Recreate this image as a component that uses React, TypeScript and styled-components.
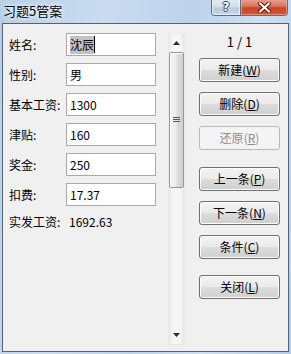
import React, { FC } from "react";
import styled, { createGlobalStyle } from "styled-components";

interface IField {
  label: string;
  value: string;
  selected?: boolean;
}

const fields: IField[] = [
  { label: "姓名:", value: "沈辰", selected: true },
  { label: "性别:", value: "男" },
  { label: "基本工资:", value: "1300" },
  { label: "津贴:", value: "160" },
  { label: "奖金:", value: "250" },
  { label: "扣费:", value: "17.37" },
];

interface IAction {
  text: string;
  key: string;
  top: number;
  disabled?: boolean;
}

const actions: IAction[] = [
  { text: "新建", key: "W", top: 8 },
  { text: "删除", key: "D", top: 10 },
  { text: "还原", key: "R", top: 10, disabled: true },
  { text: "上一条", key: "P", top: 17 },
  { text: "下一条", key: "N", top: 10 },
  { text: "条件", key: "C", top: 10 },
  { text: "关闭", key: "L", top: 16 },
];

const App: FC = () => {
  return (
    <>
      <GlobalStyle />
      <Window>
        <TitleBar>
          <Title>习题5管案</Title>
          <CaptionButtons>
            <HelpButton>?</HelpButton>
            <CloseButton>
              <svg width="13" height="11" viewBox="0 0 13 11">
                <path
                  d="M2 1.5 L11 9.5 M11 1.5 L2 9.5"
                  stroke="#5a1a10"
                  strokeWidth="4"
                  strokeLinecap="square"
                />
                <path
                  d="M2 1.5 L11 9.5 M11 1.5 L2 9.5"
                  stroke="#ffffff"
                  strokeWidth="2"
                  strokeLinecap="square"
                />
              </svg>
            </CloseButton>
          </CaptionButtons>
        </TitleBar>
        <Client>
          <Fields>
            {fields.map((f) => (
              <FieldRow key={f.label}>
                <Label>{f.label}</Label>
                <TextBox>
                  {f.selected ? (
                    <>
                      <Selection>{f.value}</Selection>
                      <Caret />
                    </>
                  ) : (
                    f.value
                  )}
                </TextBox>
              </FieldRow>
            ))}
            <ResultRow>
              <Label>实发工资:</Label>
              <Value>1692.63</Value>
            </ResultRow>
          </Fields>
          <ScrollBar>
            <ArrowBox>
              <svg width="7" height="4" viewBox="0 0 7 4">
                <path d="M3.5 0 L7 4 L0 4 Z" fill="#2b2b2b" />
              </svg>
            </ArrowBox>
            <Thumb>
              <svg width="7" height="6" viewBox="0 0 7 6">
                <path d="M0 0.5 H7 M0 2.5 H7 M0 4.5 H7" stroke="#555" strokeWidth="1" />
              </svg>
            </Thumb>
            <Track />
            <ArrowBox>
              <svg width="7" height="4" viewBox="0 0 7 4">
                <path d="M0 0 L7 0 L3.5 4 Z" fill="#2b2b2b" />
              </svg>
            </ArrowBox>
          </ScrollBar>
          <Actions>
            <Counter>1 / 1</Counter>
            {actions.map((a) => (
              <Button key={a.key} $top={a.top} disabled={a.disabled}>
                {a.text}(<u>{a.key}</u>)
              </Button>
            ))}
          </Actions>
        </Client>
      </Window>
    </>
  );
};

export default App;

const GlobalStyle = createGlobalStyle`
  html, body {
    margin: 0;
    padding: 0;
  }
  body {
    font-family: "Noto Sans CJK SC", "Noto Sans", sans-serif;
    font-size: 12px;
  }
`;

const Window = styled.div`
  width: 291px;
  height: 354px;
  box-sizing: border-box;
  display: flex;
  flex-direction: column;
  padding: 0 2px 2px 2px;
  background: linear-gradient(
    100deg,
    #b6cfe9 0%,
    #c9dcf0 30%,
    #bcd3eb 55%,
    #cde0f2 75%,
    #b4cce6 100%
  );
  overflow: hidden;
`;

const TitleBar = styled.div`
  height: 23px;
  display: flex;
  justify-content: space-between;
  align-items: flex-start;
`;

const Title = styled.div`
  padding: 3px 0 0 1px;
  font-size: 13px;
  line-height: 15px;
  color: #000;
  text-shadow: 0 0 6px #ffffff, 0 0 3px #ffffff;
`;

const CaptionButtons = styled.div`
  display: flex;
  height: 16px;
  margin-top: -1px;
  margin-right: 1px;
  border: 1px solid #5b6b80;
  border-top: none;
  border-radius: 0 0 4px 4px;
  overflow: hidden;
`;

const HelpButton = styled.div`
  width: 28px;
  display: flex;
  align-items: center;
  justify-content: center;
  border-right: 1px solid #5b6b80;
  background: linear-gradient(#e3ebf4 0%, #d3dfec 50%, #b9cbde 55%, #c9d8e8 100%);
  box-shadow: inset 0 0 0 1px rgba(255, 255, 255, 0.6);
  font-family: "DejaVu Sans", sans-serif;
  font-weight: bold;
  font-size: 12px;
  color: #ffffff;
  text-shadow: 1px 0 0 #2f3e52, -1px 0 0 #2f3e52, 0 1px 0 #2f3e52,
    0 -1px 0 #2f3e52;
`;

const CloseButton = styled.div`
  width: 46px;
  display: flex;
  align-items: center;
  justify-content: center;
  background: linear-gradient(#e8a593 0%, #d9745c 45%, #c8452b 55%, #d1573b 100%);
  box-shadow: inset 0 0 0 1px rgba(255, 200, 180, 0.5);
`;

const Client = styled.div`
  flex: 1;
  display: flex;
  background: #f0f0f0;
  border: 1px solid #566273;
`;

const Fields = styled.div`
  width: 165px;
  padding: 9px 0 0 6px;
  box-sizing: border-box;
  display: flex;
  flex-direction: column;
  gap: 7px;
`;

const FieldRow = styled.div`
  display: flex;
  align-items: center;
  height: 23px;
`;

const ResultRow = styled(FieldRow)`
  height: 18px;
`;

const Label = styled.div`
  width: 57px;
  flex-shrink: 0;
  color: #000;
  line-height: 16px;
`;

const TextBox = styled.div`
  width: 90px;
  height: 23px;
  box-sizing: border-box;
  border: 1px solid #a9a9a9;
  background: #fff;
  display: flex;
  align-items: center;
  padding-left: 3px;
  color: #000;
  line-height: 16px;
`;

const Selection = styled.span`
  background: #c2c2c2;
  padding: 1px 0;
`;

const Caret = styled.span`
  width: 1px;
  height: 17px;
  background: #000;
`;

const Value = styled.div`
  padding-left: 3px;
  color: #000;
  line-height: 16px;
`;

const ScrollBar = styled.div`
  width: 17px;
  margin-top: 9px;
  height: 312px;
  box-sizing: border-box;
  display: flex;
  flex-direction: column;
  align-items: center;
  border: 1px solid #ebebeb;
  background: linear-gradient(
    to right,
    #e6e6e6 0%,
    #f4f4f4 20%,
    #f7f7f7 50%,
    #f4f4f4 80%,
    #e6e6e6 100%
  );
`;

const ArrowBox = styled.div`
  height: 18px;
  width: 100%;
  display: flex;
  align-items: center;
  justify-content: center;
  flex-shrink: 0;
`;

const Thumb = styled.div`
  width: 15px;
  height: 136px;
  box-sizing: border-box;
  border: 1px solid #979797;
  border-radius: 2px;
  background: linear-gradient(
    to right,
    #f6f6f6 0%,
    #ececec 45%,
    #dcdcdc 55%,
    #cfcfcf 100%
  );
  box-shadow: inset 1px 1px 0 #ffffff;
  display: flex;
  align-items: center;
  justify-content: center;
  flex-shrink: 0;
`;

const Track = styled.div`
  flex: 1;
`;

const Actions = styled.div`
  width: 81px;
  margin-left: 14px;
  padding-top: 9px;
  display: flex;
  flex-direction: column;
`;

const Counter = styled.div`
  height: 17px;
  line-height: 17px;
  text-align: center;
  font-size: 13px;
  color: #000;
`;

const Button = styled.button<{ $top: number }>`
  margin-top: ${(p) => p.$top}px;
  width: 81px;
  height: 24px;
  padding: 0;
  font-family: "Noto Sans CJK SC", "Noto Sans", sans-serif;
  font-size: 12px;
  line-height: 16px;
  color: #000;
  border: 1px solid #707070;
  border-radius: 3px;
  background: linear-gradient(#f2f2f2 0%, #ebebeb 50%, #dddddd 50%, #cfcfcf 100%);
  box-shadow: inset 0 0 0 1px #fcfcfc;

  &:disabled {
    color: #8d8d8d;
    border-color: #b5b9bc;
    background: #f4f4f4;
    box-shadow: none;
  }

  u {
    text-underline-offset: 1px;
  }
`;
